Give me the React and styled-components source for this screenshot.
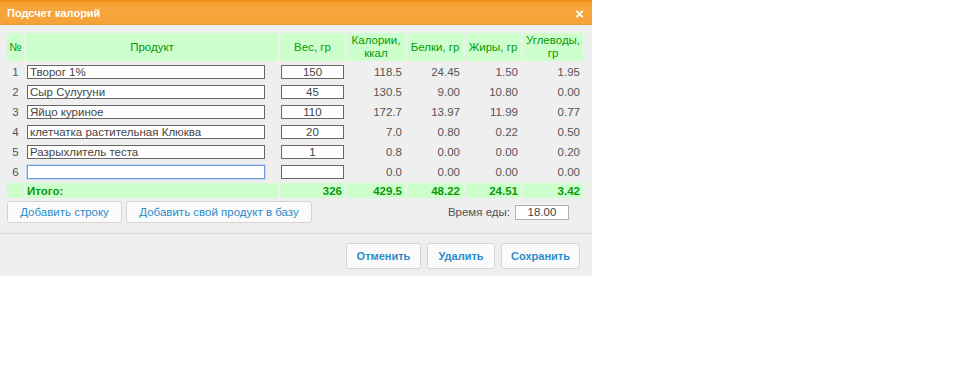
import React from "react";
import styled, { createGlobalStyle } from "styled-components";

const Global = createGlobalStyle`
  html, body { margin: 0; padding: 0; background: #ffffff; }
  body { font-family: "Liberation Sans", Arial, sans-serif; font-size: 11.5px; color: #444; }
  * { box-sizing: border-box; }
`;

const Dialog = styled.div`
  width: 592px;
  background: #efefef;
  padding-bottom: 7px;
`;

const TitleBar = styled.div`
  height: 25px;
  background: linear-gradient(#f49a26, #f7a53c 30%, #f5a238);
  border-top: 1px solid #e98d1c;
  border-bottom: 1px solid #e99a35;
  display: flex;
  align-items: center;
  justify-content: space-between;
  padding: 0 8px 0 7px;
`;

const Title = styled.div`
  color: #fff;
  font-weight: bold;
  font-size: 11px;
  margin-top: 1px;
`;

const Close = styled.div`
  color: #fff;
  font-weight: bold;
  font-size: 15px;
  line-height: 1;
  margin-top: 1px;
`;

const Content = styled.div`
  padding: 6px 7px 0 5px;
`;

const Table = styled.table`
  border-collapse: separate;
  border-spacing: 2px;
  table-layout: fixed;
  width: 580px;
`;

const HeadCell = styled.th`
  background: #ccffcc;
  color: #069a06;
  font-weight: normal;
  font-size: 11.5px;
  line-height: 13px;
  height: 28px;
  padding: 0 1px;
  text-align: center;
  vertical-align: middle;
`;

const Cell = styled.td`
  height: 18px;
  padding: 0 ${(p) => (p.$align === "right" ? "3px" : "1px")} 0 1px;
  text-align: ${(p) => p.$align || "left"};
  vertical-align: middle;
  color: #555;
  white-space: nowrap;
`;

const TotalCell = styled.td`
  height: 15px;
  padding: 0 3px 0 1px;
  background: #ccffcc;
  color: #0c990c;
  font-weight: bold;
  text-align: ${(p) => p.$align || "right"};
  vertical-align: middle;
  white-space: nowrap;
`;

const TextInput = styled.input`
  display: block;
  width: ${(p) => p.$w}px;
  height: 14px;
  border: 1px solid ${(p) => (p.$focus ? "#6f9ad8" : "#666")};
  outline: ${(p) => (p.$focus ? "1px solid #c6daf6" : "none")};
  background: #fff;
  font-family: inherit;
  font-size: 11.5px;
  color: #444;
  padding: 0 2px;
  margin: 0;
  text-align: ${(p) => p.$align || "left"};
`;

const ActionRow = styled.div`
  display: flex;
  align-items: center;
  padding: 1px 0 0 2px;
  gap: 4px;
`;

const LightButton = styled.button`
  height: 22px;
  width: ${(p) => p.$w}px;
  padding: 0;
  background: #fbfbfb;
  border: 1px solid #d4d4d4;
  border-radius: 3px;
  color: #2b8ccb;
  font-family: inherit;
  font-size: 11.5px;
  white-space: nowrap;
  cursor: pointer;
`;

const TimeBox = styled.div`
  margin-left: auto;
  margin-right: 16px;
  display: flex;
  align-items: center;
  gap: 5px;
  color: #555;
`;

const TimeInput = styled.input`
  width: 54px;
  height: 15px;
  border: 1px solid #a9b3c4;
  background: #fff;
  font-family: inherit;
  font-size: 11.5px;
  color: #444;
  text-align: center;
  padding: 0;
`;

const Separator = styled.div`
  height: 1px;
  background: #d9d9d9;
  margin-top: 10px;
`;

const Footer = styled.div`
  display: flex;
  justify-content: flex-end;
  gap: 6px;
  padding: 9px 12px 0 0;
`;

const FooterButton = styled(LightButton)`
  height: 26px;
  font-size: 11px;
  font-weight: bold;
`;

const rows = [
  { n: 1, name: "Творог 1%", w: "150", c: "118.5", b: "24.45", f: "1.50", u: "1.95" },
  { n: 2, name: "Сыр Сулугуни", w: "45", c: "130.5", b: "9.00", f: "10.80", u: "0.00" },
  { n: 3, name: "Яйцо куриное", w: "110", c: "172.7", b: "13.97", f: "11.99", u: "0.77" },
  { n: 4, name: "клетчатка растительная Клюква", w: "20", c: "7.0", b: "0.80", f: "0.22", u: "0.50" },
  { n: 5, name: "Разрыхлитель теста", w: "1", c: "0.8", b: "0.00", f: "0.00", u: "0.20" },
  { n: 6, name: "", w: "", c: "0.0", b: "0.00", f: "0.00", u: "0.00", focus: true },
];

export default function App() {
  return (
    <>
      <Global />
      <Dialog>
        <TitleBar>
          <Title>Подсчет калорий</Title>
          <Close>×</Close>
        </TitleBar>
        <Content>
          <Table>
            <colgroup>
              <col style={{ width: 17 }} />
              <col style={{ width: 252 }} />
              <col style={{ width: 65 }} />
              <col style={{ width: 58 }} />
              <col style={{ width: 56 }} />
              <col style={{ width: 56 }} />
              <col style={{ width: 60 }} />
            </colgroup>
            <thead>
              <tr>
                <HeadCell>№</HeadCell>
                <HeadCell>Продукт</HeadCell>
                <HeadCell>Вес, гр</HeadCell>
                <HeadCell>Калории, ккал</HeadCell>
                <HeadCell>Белки, гр</HeadCell>
                <HeadCell>Жиры, гр</HeadCell>
                <HeadCell>Углеводы, гр</HeadCell>
              </tr>
            </thead>
            <tbody>
              {rows.map((r) => (
                <tr key={r.n}>
                  <Cell $align="center">{r.n}</Cell>
                  <Cell>
                    <TextInput $w={238} defaultValue={r.name} $focus={r.focus} />
                  </Cell>
                  <Cell>
                    <TextInput $w={63} $align="center" defaultValue={r.w} />
                  </Cell>
                  <Cell $align="right">{r.c}</Cell>
                  <Cell $align="right">{r.b}</Cell>
                  <Cell $align="right">{r.f}</Cell>
                  <Cell $align="right">{r.u}</Cell>
                </tr>
              ))}
              <tr>
                <TotalCell />
                <TotalCell $align="left">Итого:</TotalCell>
                <TotalCell>326</TotalCell>
                <TotalCell>429.5</TotalCell>
                <TotalCell>48.22</TotalCell>
                <TotalCell>24.51</TotalCell>
                <TotalCell>3.42</TotalCell>
              </tr>
            </tbody>
          </Table>
          <ActionRow>
            <LightButton $w={115}>Добавить строку</LightButton>
            <LightButton $w={186}>Добавить свой продукт в базу</LightButton>
            <TimeBox>
              <span>Время еды:</span>
              <TimeInput defaultValue="18.00" />
            </TimeBox>
          </ActionRow>
        </Content>
        <Separator />
        <Footer>
          <FooterButton $w={75}>Отменить</FooterButton>
          <FooterButton $w={68}>Удалить</FooterButton>
          <FooterButton $w={79}>Сохранить</FooterButton>
        </Footer>
      </Dialog>
    </>
  );
}
